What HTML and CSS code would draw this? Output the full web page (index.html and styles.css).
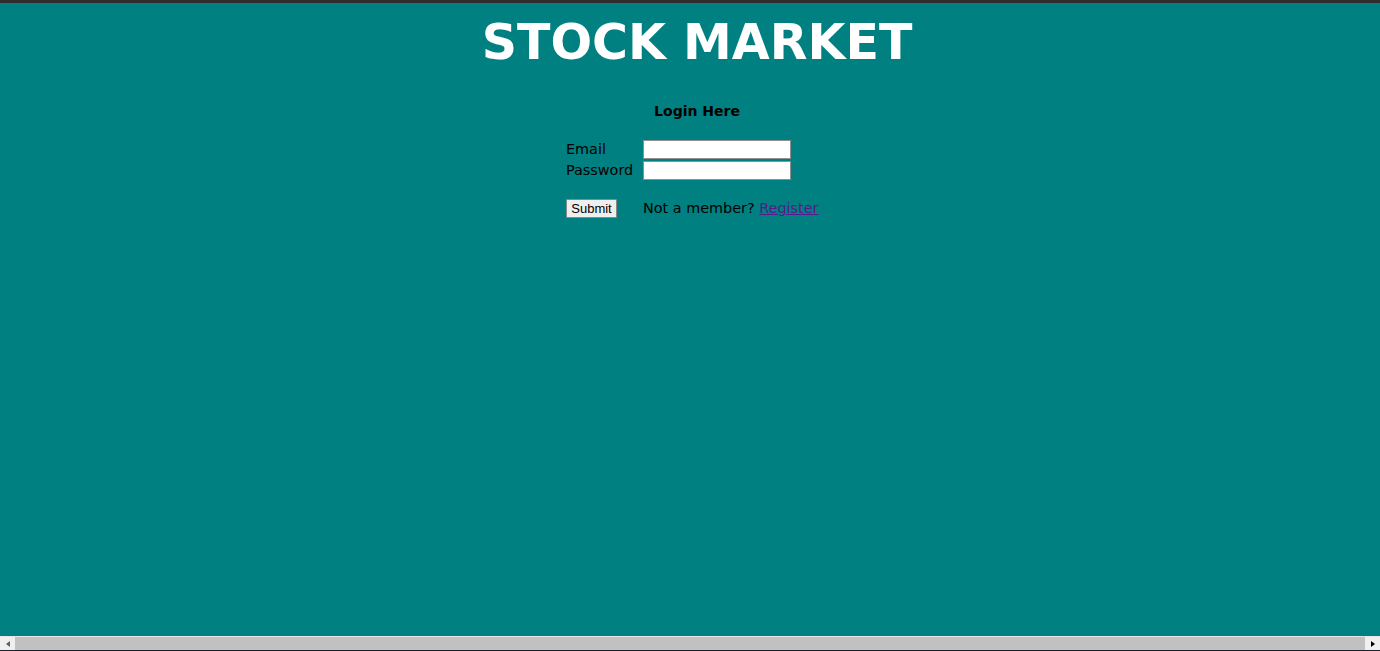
FILE: index.html
```html
<!DOCTYPE html>
<html lang="en">
<head>
<meta charset="utf-8">
<title>Stock Market</title>
<link rel="stylesheet" href="styles.css">
</head>
<body>
<div class="topbar"></div>
<div class="page">
  <h1 class="title">STOCK MARKET</h1>
  <h4 class="login-title">Login Here</h4>
  <form class="login-form">
    <label class="lbl" for="email">Email</label>
    <input class="field" id="email" type="text">
    <label class="lbl" for="pwd">Password</label>
    <input class="field" id="pwd" type="password">
    <div class="actions">
      <button class="submit" type="button">Submit</button>
      <span class="member">Not a member? <a class="reg" href="#">Register</a></span>
    </div>
  </form>
</div>
<div class="hscroll">
  <div class="sbtn"><span class="tri-left"></span></div>
  <div class="track"></div>
  <div class="sbtn"><span class="tri-right"></span></div>
</div>
</body>
</html>
```
FILE: styles.css
```css
html, body {
  margin: 0;
  padding: 0;
  height: 100%;
  overflow: hidden;
  background: #008080;
  font-family: "DejaVu Sans", Verdana, sans-serif;
}
.topbar {
  height: 3px;
  background: #2e2e2e;
}
.page {
  width: 1394px;
}
.title {
  margin: 0;
  padding-top: 12px;
  text-align: center;
  color: #ffffff;
  font-size: 49px;
  font-weight: bold;
  line-height: 56px;
}
.login-title {
  margin: 32px 0 0;
  text-align: center;
  font-size: 14px;
  font-weight: bold;
  line-height: 17px;
  color: #000;
}
.login-form {
  margin: 20px 0 0 566px;
  display: grid;
  grid-template-columns: 77px auto;
  row-gap: 2px;
  align-items: center;
  font-size: 14.4px;
  color: #000;
}
.lbl {
  line-height: 19px;
}
.field {
  box-sizing: border-box;
  width: 148px;
  height: 19px;
  margin: 0;
  border: 1px solid #8f8f8f;
  background: #fff;
  padding: 0 2px;
}
.actions {
  grid-column: 1 / 3;
  display: grid;
  grid-template-columns: 77px auto;
  align-items: center;
  margin-top: 17px;
}
.submit {
  box-sizing: border-box;
  width: 51px;
  height: 19px;
  margin: 0;
  padding: 0;
  font-family: "Liberation Sans", Arial, sans-serif;
  font-size: 13px;
  color: #000;
  background: #efefef;
  border: 1px solid #8a8a8a;
  border-radius: 1px;
}
.member {
  line-height: 19px;
}
.reg {
  color: #551a8b;
  text-decoration: underline;
}
.hscroll {
  position: fixed;
  left: 0;
  right: 0;
  bottom: 0;
  height: 13px;
  display: flex;
  border-top: 1px solid #e6e6e6;
  background: #c1c1c1;
  border-bottom: 1px solid #1c202a;
}
.sbtn {
  width: 15px;
  flex: none;
  background: #f0f0f0;
  display: flex;
  align-items: center;
  justify-content: center;
}
.track {
  flex: 1;
  background: #c1c1c1;
}
.tri-left {
  width: 0;
  height: 0;
  border-top: 3.5px solid transparent;
  border-bottom: 3.5px solid transparent;
  border-right: 4px solid #606060;
}
.tri-right {
  width: 0;
  height: 0;
  border-top: 3.5px solid transparent;
  border-bottom: 3.5px solid transparent;
  border-left: 4px solid #000;
}
```
